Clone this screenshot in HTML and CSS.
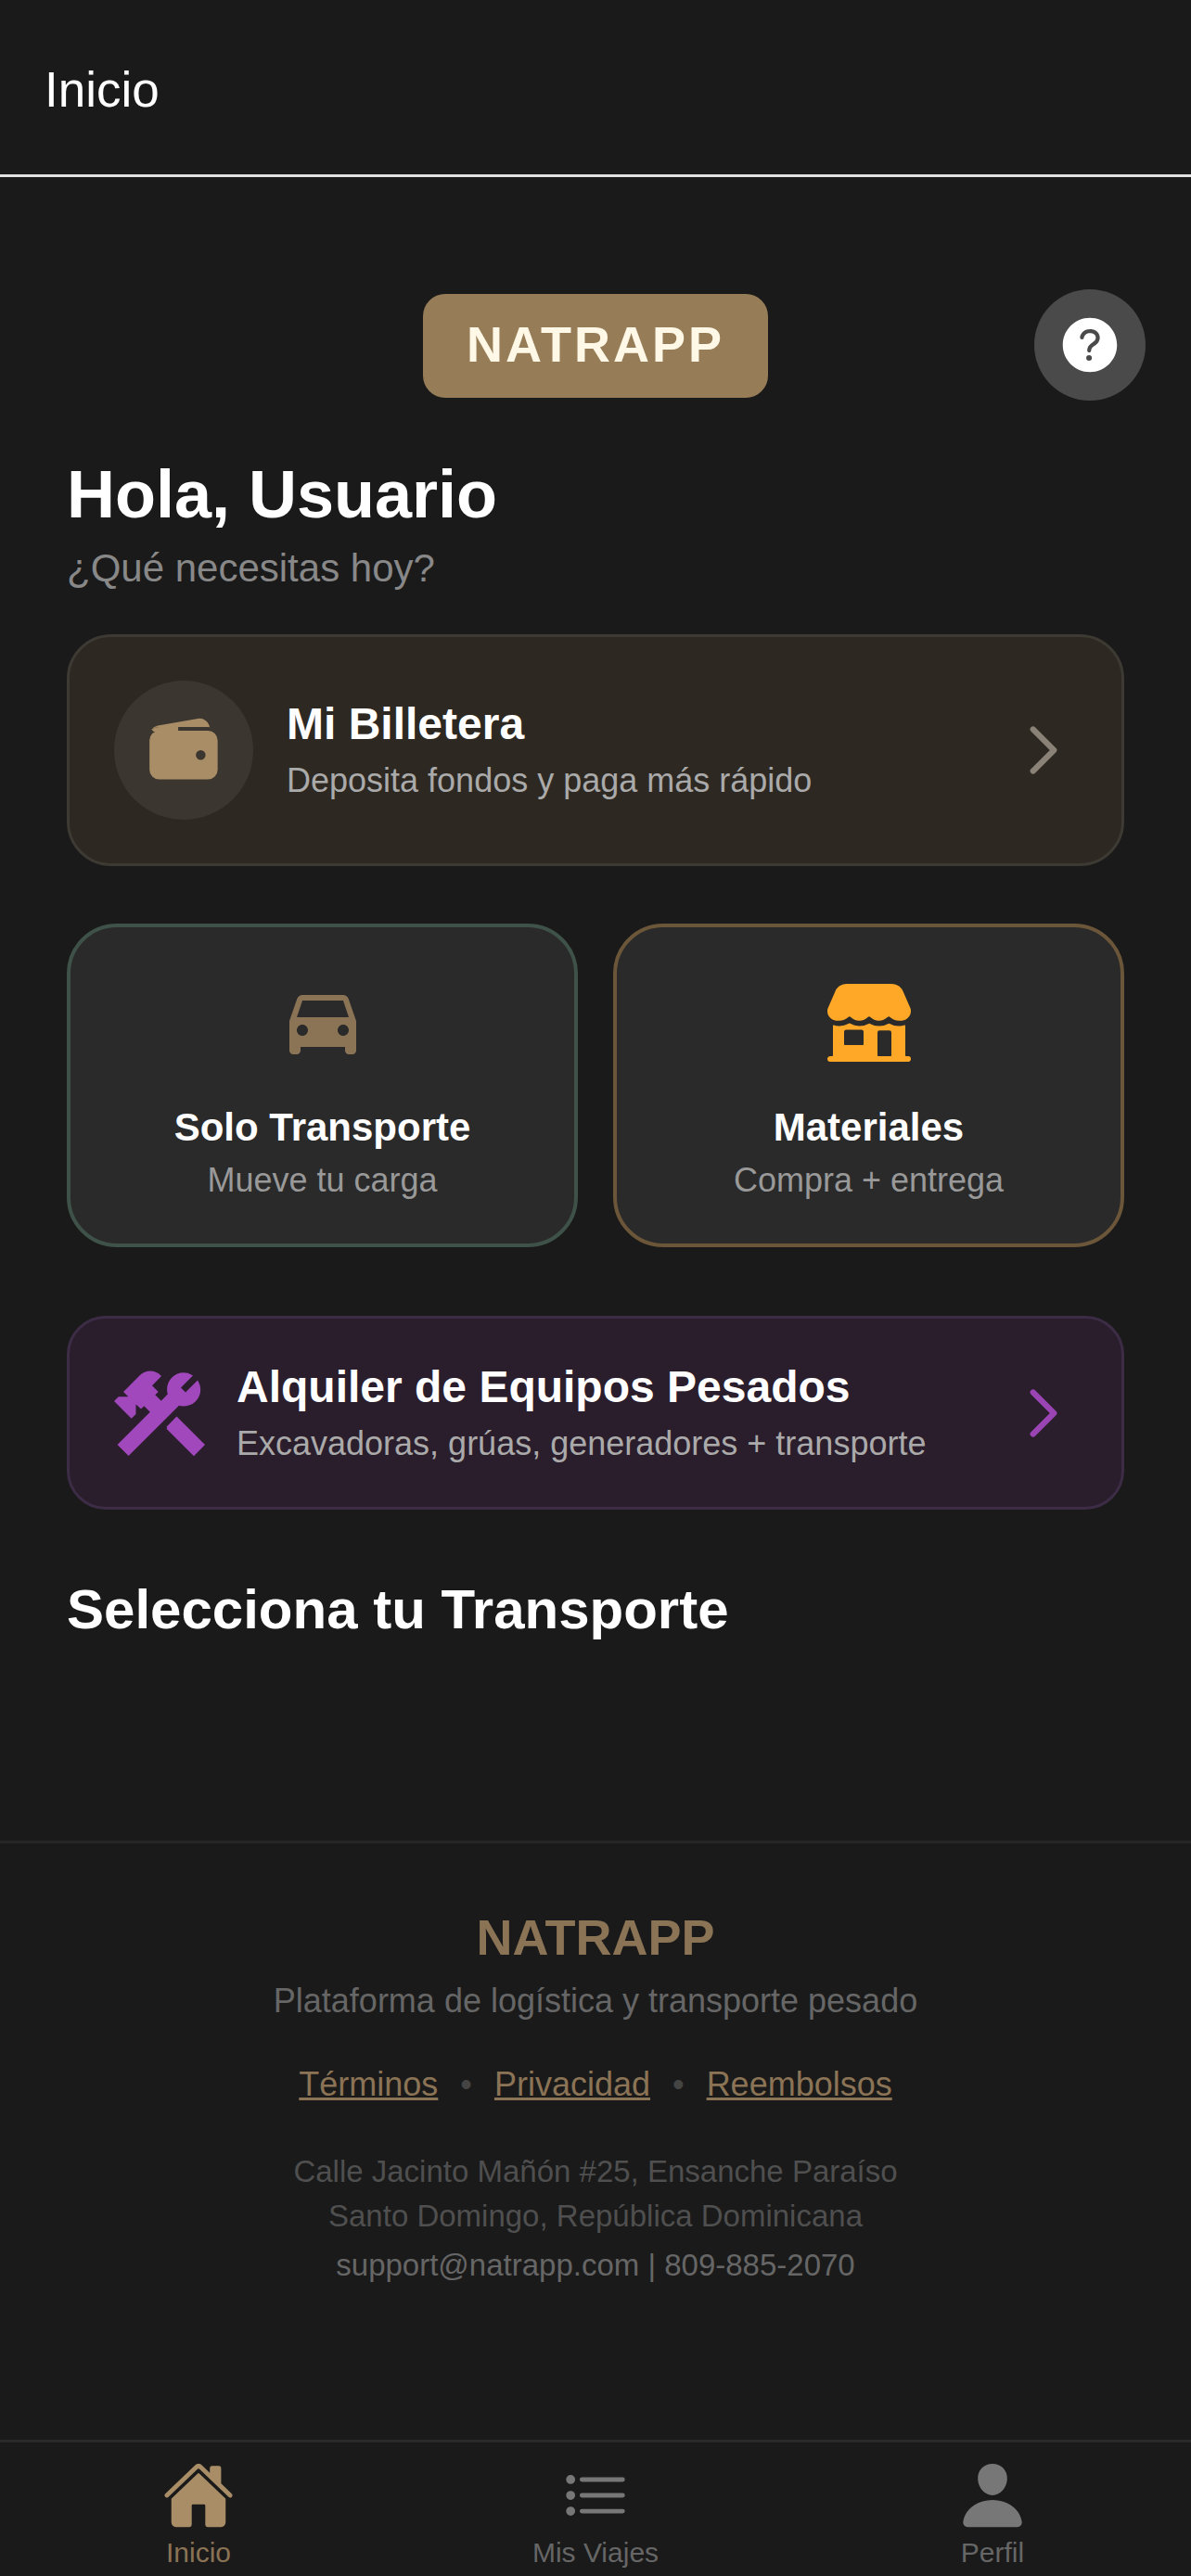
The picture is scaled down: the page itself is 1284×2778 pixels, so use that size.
FILE: index.html
```html
<!DOCTYPE html>
<html lang="es">
<head>
    <meta charset="UTF-8">
    <meta name="viewport" content="width=device-width, initial-scale=1.0">
    <title>Inicio - NATRAPP</title>
    <link rel="stylesheet" href="styles.css">
</head>
<body>

    <header class="top-bar">
        <h1>Inicio</h1>
    </header>

    <main class="content">
        <div class="logo-row">
            <div class="logo">NATRAPP</div>
            <button class="help-button">
                <svg viewBox="0 0 512 512" class="help-icon"><path fill-rule="evenodd" d="M256 64C150 64 64 150 64 256s86 192 192 192 192-86 192-192S362 64 256 64zm-6 304a20 20 0 1120-20 20 20 0 01-20 20zm33.44-102C267.23 276.88 265 286.85 265 296a14 14 0 01-28 0c0-21.91 10.08-39.33 30.82-53.26C287.1 229.8 298 221.6 298 203.57c0-12.26-7-21.57-21.49-28.46-3.41-1.62-11-3.2-20.34-3.09-11.72.15-20.82 2.95-27.83 8.59C215.12 191.25 214 202.83 214 203a14 14 0 11-28-1.35c.11-2.43 1.8-24.32 24.77-42.8 11.91-9.58 27.06-14.56 45-14.78 12.7-.15 24.63 2 32.72 5.82C312.7 161.34 326 180.43 326 203.57c0 33.83-22.61 49.02-42.56 62.43z"/></svg>
            </button>
        </div>

        <h2 class="greeting">Hola, Usuario</h2>
        <p class="greeting-sub">¿Qué necesitas hoy?</p>

        <!-- Wallet -->
        <div class="wallet-card">
            <div class="wallet-circle">
                <svg viewBox="0 0 512 512" class="wallet-icon"><path fill-rule="evenodd" d="M95.5 104h320a87.73 87.73 0 0111.18.71 66 66 0 00-77.51-55.56L86 94.08h-.3a66 66 0 00-41.07 26.13A87.57 87.57 0 0195.5 104zM415.5 128h-320a64.07 64.07 0 00-64 64v192a64.07 64.07 0 0064 64h320a64.07 64.07 0 0064-64V192a64.07 64.07 0 00-64-64zM368 320a32 32 0 1132-32 32 32 0 01-32 32z"/><path d="M44.6 120.2A87.57 87.57 0 0195.5 104H220v30H60z"/></svg>
            </div>
            <div class="row-text">
                <div class="row-title">Mi Billetera</div>
                <div class="row-sub">Deposita fondos y paga más rápido</div>
            </div>
            <svg viewBox="0 0 512 512" class="chevron chevron-gray"><path d="M184 112l144 144-144 144"/></svg>
        </div>

        <!-- Service cards -->
        <div class="service-grid">
            <div class="service-card service-green">
                <div class="service-icon">
                    <svg viewBox="0 0 24 24" class="car-icon"><path d="M18.92 6.01C18.72 5.42 18.16 5 17.5 5h-11c-.66 0-1.21.42-1.42 1.01L3 12v8c0 .55.45 1 1 1h1c.55 0 1-.45 1-1v-1h12v1c0 .55.45 1 1 1h1c.55 0 1-.45 1-1v-8l-2.08-5.99zM6.5 16c-.83 0-1.5-.67-1.5-1.5S5.67 13 6.5 13s1.5.67 1.5 1.5S7.33 16 6.5 16zm11 0c-.83 0-1.5-.67-1.5-1.5s.67-1.5 1.5-1.5 1.5.67 1.5 1.5-.67 1.5-1.5 1.5zM5 11l1.5-4.5h11L19 11H5z"/></svg>
                </div>
                <div class="service-title">Solo Transporte</div>
                <div class="service-sub">Mueve tu carga</div>
            </div>
            <div class="service-card service-brown">
                <div class="service-icon">
                    <svg viewBox="0 0 512 512" class="store-icon">
                        <path fill-rule="evenodd" d="M480 448h-12a4 4 0 01-4-4V273.51a4 4 0 00-5.24-3.86 104.92 104.92 0 01-28.32 4.78c-1.18 0-2.3.05-3.4.05a108.22 108.22 0 01-52.85-13.64 8.23 8.23 0 00-8 0 108.18 108.18 0 01-52.84 13.64 106.11 106.11 0 01-52.46-13.79 8.21 8.21 0 00-8.09 0 108.14 108.14 0 01-53.16 13.8 106.2 106.2 0 01-52.77-14 8.25 8.25 0 00-8.16 0 106.19 106.19 0 01-52.77 14c-1.09 0-2.19 0-3.37-.05h-.06a104.91 104.91 0 01-29.28-5.09 4 4 0 00-5.23 3.8V444a4 4 0 01-4 4H32.5c-8.64 0-16.1 6.64-16.48 15.28A16 16 0 0032 480h447.5c8.64 0 16.1-6.64 16.48-15.28A16 16 0 00480 448zm-256-68a4 4 0 01-4 4H116a4 4 0 01-4-4v-72a12 12 0 0112-12h88a12 12 0 0112 12zm156 68h-72a4 4 0 01-4-4V312a12 12 0 0112-12h56a12 12 0 0112 12v132a4 4 0 01-4 4z"/>
                        <path d="M127.7 32h256.55c28.49 0 54.16 15.62 65.4 39.79l42.92 98.49c9 19.41 4 70-58 74-24 1.5-44-8-58-20-5-5-10-5-15 0-15 13-29 20-49 20s-36-7-49-20c-5-5-10-5-15 0-13 13-29 20-49 20s-36-7-49-20c-5-5-10-5-15 0-14 12-34 21.5-58 20-62-4-67-54.6-58-74l42.92-98.49C73.54 47.62 99.21 32 127.7 32z"/>
                    </svg>
                </div>
                <div class="service-title">Materiales</div>
                <div class="service-sub">Compra + entrega</div>
            </div>
        </div>

        <!-- Heavy equipment -->
        <div class="rental-card">
            <svg viewBox="0 0 24 24" class="tools-icon"><path d="M13.78 15.3L19.78 21.3L21.89 19.14L15.89 13.14L13.78 15.3M17.5 10.1C17.11 10.1 16.69 10.05 16.36 9.91L4.97 21.25L2.86 19.14L10.27 11.74L8.5 9.96L7.78 10.66L6.33 9.25V12.11L5.63 12.81L2.11 9.25L2.81 8.55H5.62L4.22 7.14L7.78 3.58C8.95 2.41 10.83 2.41 12 3.58L9.89 5.74L11.3 7.14L10.59 7.85L12.38 9.63L14.2 7.75C14.06 7.42 14 7 14 6.63C14 4.66 15.56 3.11 17.5 3.11C18.09 3.11 18.61 3.25 19.08 3.53L16.41 6.2L17.91 7.7L20.58 5.03C20.86 5.5 21 6 21 6.63C21 8.59 19.44 10.1 17.5 10.1Z"/></svg>
            <div class="row-text">
                <div class="row-title">Alquiler de Equipos Pesados</div>
                <div class="row-sub">Excavadoras, grúas, generadores + transporte</div>
            </div>
            <svg viewBox="0 0 512 512" class="chevron chevron-purple"><path d="M184 112l144 144-144 144"/></svg>
        </div>

        <h2 class="section-title">Selecciona tu Transporte</h2>
    </main>

    <footer class="site-footer">
        <div class="footer-brand">NATRAPP</div>
        <p class="footer-tagline">Plataforma de logística y transporte pesado</p>
        <div class="footer-links">
            <a href="#">Términos</a>
            <span class="dot">•</span>
            <a href="#">Privacidad</a>
            <span class="dot">•</span>
            <a href="#">Reembolsos</a>
        </div>
        <p class="footer-address">Calle Jacinto Mañón #25, Ensanche Paraíso</p>
        <p class="footer-address">Santo Domingo, República Dominicana</p>
        <p class="footer-contact">support@natrapp.com | 809-885-2070</p>
    </footer>

    <nav class="bottom-nav">
        <div class="nav-item nav-active">
            <svg viewBox="0 0 512 512" class="nav-icon"><path d="M261.56 101.28a8 8 0 00-11.06 0L66.4 277.15a8 8 0 00-2.47 5.79L63.9 448a32 32 0 0032 32H192a16 16 0 0016-16V328a8 8 0 018-8h80a8 8 0 018 8v136a16 16 0 0016 16h96.06a32 32 0 0032-32V282.94a8 8 0 00-2.47-5.79z"/><path d="M490.91 244.15l-74.8-71.56V64a16 16 0 00-16-16h-48a16 16 0 00-16 16v32l-57.92-55.38C272.77 35.14 264.71 32 256 32c-8.68 0-16.72 3.14-22.14 8.63l-212.7 203.5c-6.22 6-7 15.87-1.34 22.37A16 16 0 0043 267.56L250.5 69.28a8 8 0 0111.06 0l207.52 198.28a16 16 0 0022.59-.44c6.14-6.36 5.63-16.86-.76-22.97z"/></svg>
            <span>Inicio</span>
        </div>
        <div class="nav-item">
            <svg viewBox="0 0 512 512" class="nav-icon nav-list"><path d="M160 144h288M160 256h288M160 368h288"/><circle cx="80" cy="144" r="16"/><circle cx="80" cy="256" r="16"/><circle cx="80" cy="368" r="16"/></svg>
            <span>Mis Viajes</span>
        </div>
        <div class="nav-item">
            <svg viewBox="0 0 512 512" class="nav-icon"><path d="M332.64 64.58C313.18 43.57 286 32 256 32c-30.16 0-57.43 11.5-76.8 32.38-19.58 21.11-29.12 49.8-26.88 80.78C156.76 206.28 203.27 256 256 256s99.16-49.71 103.67-110.82c2.27-30.7-7.33-59.33-27.03-80.6zM432 480H80a31 31 0 01-24.2-11.13c-6.5-7.77-9.12-18.38-7.18-29.11C57.06 392.94 83.4 353.61 124.8 326c36.78-24.51 83.37-38 131.2-38s94.42 13.5 131.2 38c41.4 27.6 67.74 66.93 76.18 113.75 1.94 10.73-.68 21.34-7.18 29.11A31 31 0 01432 480z"/></svg>
            <span>Perfil</span>
        </div>
    </nav>

</body>
</html>
```

FILE: styles.css
```css
/* General styling */
body {
    font-family: 'Liberation Sans', Arial, sans-serif;
    margin: 0;
    padding: 0;
    background: #1a1a1a;
    color: #fff;
    min-height: 2778px;
    display: flex;
    flex-direction: column;
}

p, h1, h2 {
    margin: 0;
}

/* Header */
.top-bar {
    height: 188px;
    box-sizing: content-box;
    border-bottom: 3px solid #e2e2e2;
    padding: 0 48px;
    display: flex;
    align-items: center;
}

.top-bar h1 {
    font-size: 53px;
    font-weight: 400;
    color: #fff;
    margin-top: 4px;
}

.content {
    padding: 126px 72px 0;
    flex: 1;
}

/* Logo */
.logo-row {
    position: relative;
    display: flex;
    justify-content: center;
    margin-bottom: 62px;
}

.logo {
    width: 372px;
    height: 112px;
    box-sizing: border-box;
    padding-bottom: 5px;
    background: #967d58;
    border-radius: 24px;
    display: flex;
    align-items: center;
    justify-content: center;
    font-size: 54px;
    font-weight: 700;
    letter-spacing: 3px;
    color: #fff8e7;
}

.help-button {
    position: absolute;
    right: -23px;
    top: -5px;
    width: 120px;
    height: 120px;
    border: none;
    border-radius: 50%;
    background: #4a4a4a;
    padding: 0;
    display: flex;
    align-items: center;
    justify-content: center;
}

.help-icon {
    width: 78px;
    height: 78px;
    fill: #fff;
}

.greeting {
    font-size: 72px;
    line-height: 84px;
    font-weight: 700;
}

.greeting-sub {
    font-size: 42px;
    line-height: 54px;
    color: #888;
    margin-top: 11px;
    margin-bottom: 44px;
}

/* Wallet row */
.wallet-card {
    height: 250px;
    box-sizing: border-box;
    background: #2d2822;
    border: 3px solid #3d3a33;
    border-radius: 48px;
    padding: 0 44px 0 48px;
    display: flex;
    align-items: center;
    margin-bottom: 62px;
}

.wallet-circle {
    width: 150px;
    height: 150px;
    border-radius: 50%;
    background: #3b362f;
    display: flex;
    align-items: center;
    justify-content: center;
    flex-shrink: 0;
    margin-right: 36px;
}

.wallet-icon {
    width: 84px;
    height: 84px;
    fill: #a98d66;
}

.row-text {
    flex: 1;
}

.row-title {
    font-size: 48px;
    line-height: 58px;
    font-weight: 700;
    color: #fff;
}

.row-sub {
    font-size: 36px;
    line-height: 48px;
    color: #aaa;
    margin-top: 8px;
}

.chevron {
    width: 80px;
    height: 80px;
    fill: none;
    stroke-width: 40;
    stroke-linecap: round;
    stroke-linejoin: round;
    flex-shrink: 0;
}

.chevron-gray {
    stroke: #8a8276;
}

.chevron-purple {
    stroke: #9b45b5;
}

/* Service cards */
.service-grid {
    display: grid;
    grid-template-columns: 1fr 1fr;
    gap: 38px;
    margin-bottom: 74px;
}

.service-card {
    height: 349px;
    box-sizing: border-box;
    background: #2a2a2a;
    border: 4px solid #444;
    border-radius: 54px;
    display: flex;
    flex-direction: column;
    align-items: center;
    padding-top: 45px;
}

.service-green {
    border-color: #3f5249;
}

.service-brown {
    border-color: #6b5639;
}

.service-icon {
    height: 112px;
    display: flex;
    align-items: center;
    justify-content: center;
    margin-bottom: 32px;
}

.car-icon {
    width: 96px;
    height: 96px;
    fill: #8b7355;
}

.store-icon {
    width: 96px;
    height: 96px;
    fill: #ffa726;
    margin-top: 3px;
}

.service-title {
    font-size: 42px;
    line-height: 54px;
    font-weight: 700;
}

.service-sub {
    font-size: 36px;
    line-height: 48px;
    color: #999;
    margin-top: 6px;
}

/* Heavy equipment row */
.rental-card {
    height: 209px;
    box-sizing: border-box;
    background: #2a1d2c;
    border: 3px solid #3d2c45;
    border-radius: 42px;
    padding: 0 44px 0 48px;
    display: flex;
    align-items: center;
    margin-bottom: 72px;
}

.tools-icon {
    width: 114px;
    height: 114px;
    fill: #a048bc;
    stroke: #a048bc;
    stroke-width: 0.6;
    flex-shrink: 0;
    margin-right: 26px;
    margin-left: -8px;
}

.section-title {
    font-size: 60px;
    line-height: 72px;
    font-weight: 700;
}

/* Footer */
.site-footer {
    border-top: 3px solid #262626;
    height: 646px;
    box-sizing: border-box;
    padding-top: 70px;
    text-align: center;
}

.footer-brand {
    font-size: 54px;
    line-height: 62px;
    font-weight: 700;
    color: #8b7355;
    margin-bottom: 14px;
}

.footer-tagline {
    font-size: 36px;
    line-height: 48px;
    color: #666;
    margin-bottom: 42px;
}

.footer-links {
    font-size: 36px;
    line-height: 48px;
    display: flex;
    justify-content: center;
    gap: 24px;
    margin-bottom: 46px;
}

.footer-links a {
    color: #8b7355;
}

.footer-links .dot {
    color: #444;
}

.footer-address {
    font-size: 33px;
    line-height: 48px;
    color: #4f4f4f;
}

.footer-contact {
    font-size: 33px;
    line-height: 54px;
    color: #666;
    margin-top: 2px;
}

/* Bottom navigation */
.bottom-nav {
    height: 147px;
    box-sizing: border-box;
    border-top: 3px solid #2a2a2a;
    display: grid;
    grid-template-columns: repeat(3, 1fr);
}

.nav-item {
    display: flex;
    flex-direction: column;
    align-items: center;
    padding-top: 18px;
    font-size: 30px;
    line-height: 36px;
    color: #666;
}

.nav-item span {
    margin-top: 5px;
}

.nav-icon {
    width: 78px;
    height: 78px;
    fill: #777;
}

.nav-list {
    fill: #777;
    stroke: #777;
    stroke-width: 32;
    stroke-linecap: round;
}

.nav-active {
    color: #8b7355;
}

.nav-active .nav-icon {
    fill: #a98d66;
}
```
